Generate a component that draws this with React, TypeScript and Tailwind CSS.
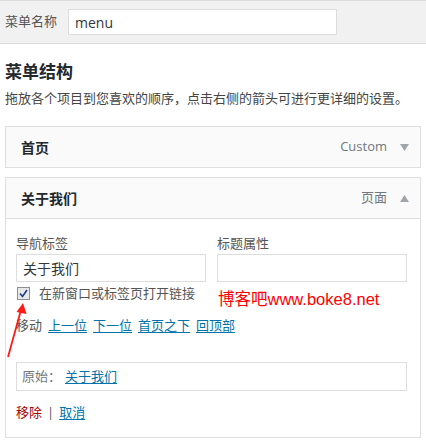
const font = { fontFamily: '"Open Sans", "Noto Sans CJK SC", sans-serif' };

function Triangle({ up }: { up?: boolean }) {
  return (
    <svg width="9" height="7" viewBox="0 0 9 7" className="ml-[13px]">
      {up ? <path d="M0 7 L4.5 0 L9 7 Z" fill="#a0a5aa" /> : <path d="M0 0 L9 0 L4.5 7 Z" fill="#a0a5aa" />}
    </svg>
  );
}

export default function App() {
  return (
    <div className="relative w-[426px] h-[444px] bg-white text-[13px] text-[#444]" style={font}>
      {/* menu name bar */}
      <div className="h-[44px] bg-[#f1f1f1] border-t border-b border-[#dcdcdc] flex items-center px-[5px]">
        <span className="text-[#555] w-[63px]">菜单名称</span>
        <div className="w-[269px] h-[26px] bg-white border border-[#ddd] flex items-center px-[6px] text-[14px] text-[#32373c]">
          menu
        </div>
      </div>

      <div className="px-[5px]">
        <h2 className="mt-[17px] text-[17px] font-bold text-[#23282d] leading-[22px]">菜单结构</h2>
        <p className="mt-[5px] leading-[20px] text-[#444]">拖放各个项目到您喜欢的顺序，点击右侧的箭头可进行更详细的设置。</p>

        {/* item 1 */}
        <div className="mt-[18px] h-[42px] border border-[#dfdfdf] bg-[#fafafa] flex items-center pl-[15px] pr-[11px]">
          <span className="font-bold text-[14px] text-[#23282d]">首页</span>
          <span className="ml-auto text-[#72777c]">Custom</span>
          <Triangle />
        </div>

        {/* item 2 */}
        <div className="mt-[9px] border border-[#dfdfdf] bg-white">
          <div className="h-[41px] bg-[#fafafa] border-b border-[#dfdfdf] flex items-center pl-[15px] pr-[11px]">
            <span className="font-bold text-[14px] text-[#23282d]">关于我们</span>
            <span className="ml-auto text-[#72777c]">页面</span>
            <Triangle up />
          </div>
          <div className="pl-[10px] pr-[13px] pt-[14px] pb-[15px]">
            <div className="flex gap-[11px]">
              <div className="w-[190px]">
                <div className="leading-[20px] text-[#555]">导航标签</div>
                <div className="mt-[1px] h-[28px] border border-[#ddd] flex items-center px-[6px] text-[14px] text-[#32373c]">关于我们</div>
              </div>
              <div className="w-[190px]">
                <div className="leading-[20px] text-[#555]">标题属性</div>
                <div className="mt-[1px] h-[28px] border border-[#ddd]" />
              </div>
            </div>
            <div className="mt-[4px] flex items-center h-[15px]">
              <div className="w-[13px] h-[13px] ml-[1px] border border-[#8c8f94] bg-[#e8e8e8] flex items-center justify-center">
                <svg width="9" height="9" viewBox="0 0 9 9">
                  <path d="M1 4.5 L3.5 7.5 L8 1" fill="none" stroke="#1e3a8a" strokeWidth="1.6" />
                </svg>
              </div>
              <span className="ml-[9px] text-[#555]">在新窗口或标签页打开链接</span>
            </div>
            <div className="mt-[15px] flex gap-[6px] leading-[18px]">
              <span className="text-[#555]">移动</span>
              <span className="text-[#0073aa] underline underline-offset-2">上一位</span>
              <span className="text-[#0073aa] underline underline-offset-2">下一位</span>
              <span className="text-[#0073aa] underline underline-offset-2">首页之下</span>
              <span className="text-[#0073aa] underline underline-offset-2">回顶部</span>
            </div>
            <div className="mt-[28px] h-[29px] border border-[#ddd] flex items-center px-[5px]">
              <span className="text-[#72777c]">原始：</span>
              <span className="ml-[4px] text-[#0073aa] underline underline-offset-2">关于我们</span>
            </div>
            <div className="mt-[11px] flex items-center leading-[20px]">
              <span className="text-[#a00]">移除</span>
              <span className="mx-[5px] text-[#555]">|</span>
              <span className="text-[#0073aa] underline underline-offset-2">取消</span>
            </div>
          </div>
        </div>
      </div>

      {/* watermark */}
      <div className="absolute left-[218px] top-[288px] text-[16.5px] text-[#ff0000] leading-[22px]" style={{ fontFamily: '"Liberation Sans", "Noto Sans CJK SC", sans-serif' }}>
        博客吧www.boke8.net
      </div>

      {/* red arrow */}
      <svg className="absolute left-0 top-0" width="426" height="444" viewBox="0 0 426 444">
        <line x1="8" y1="357" x2="21" y2="310" stroke="#ff1a1a" strokeWidth="1.8" />
        <path d="M23 303 L26.5 314 L16.5 312 Z" fill="#ff1a1a" />
      </svg>
    </div>
  );
}
